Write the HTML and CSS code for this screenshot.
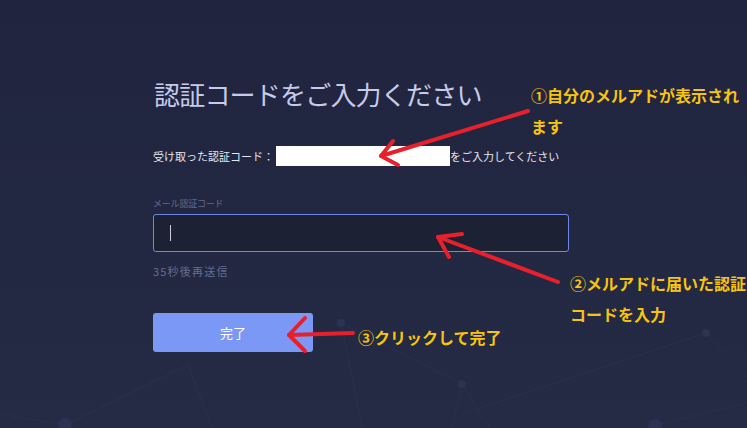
FILE: index.html
```html
<!DOCTYPE html>
<html lang="ja">
<head>
<meta charset="utf-8">
<title>認証コードをご入力ください</title>
<link rel="stylesheet" href="styles.css">
</head>
<body>
<div class="page">
  <svg class="bg-net" width="747" height="428" viewBox="0 0 747 428" aria-hidden="true">
    <g class="net-lines">
      <line x1="0" y1="414" x2="65" y2="425"/>
      <line x1="65" y1="425" x2="188" y2="365"/>
      <line x1="188" y1="365" x2="212" y2="428"/>
      <line x1="341" y1="323" x2="462" y2="384"/>
      <line x1="341" y1="323" x2="362" y2="428"/>
      <line x1="462" y1="384" x2="452" y2="428"/>
      <line x1="462" y1="384" x2="490" y2="428"/>
      <line x1="462" y1="414" x2="706" y2="333"/>
      <line x1="706" y1="333" x2="747" y2="377"/>
      <line x1="655" y1="425" x2="747" y2="403"/>
    </g>
    <g class="net-dots">
      <circle cx="65" cy="425" r="7"/>
      <circle cx="341" cy="323" r="4"/>
      <circle cx="462" cy="384" r="4"/>
      <circle cx="706" cy="333" r="4"/>
      <circle cx="655" cy="426" r="7"/>
    </g>
  </svg>

  <main class="form">
    <h1 class="title">認証コードをご入力ください</h1>
    <p class="notice">
      <span>受け取った認証コード：</span><span class="masked"></span><span>をご入力してください</span>
    </p>
    <label class="field-label">メール認証コード</label>
    <div class="code-input"><span class="caret"></span></div>
    <p class="resend">35秒後再送信</p>
    <button class="submit" type="button">完了</button>
  </main>

  <svg class="arrows" width="747" height="428" viewBox="0 0 747 428" aria-hidden="true">
    <g class="arrow">
      <line x1="528" y1="111" x2="381" y2="156"/>
      <polyline points="393,141 381,156 398,165"/>
    </g>
    <g class="arrow">
      <line x1="558" y1="282" x2="438" y2="237"/>
      <polyline points="462,234 438,237 449,257"/>
    </g>
    <g class="arrow">
      <line x1="353" y1="333" x2="289" y2="335"/>
      <polyline points="305,318 289,335 305,351"/>
    </g>
  </svg>

  <div class="note note-1">①自分のメルアドが表示され<br>ます</div>
  <div class="note note-2">②メルアドに届いた認証<br>コードを入力</div>
  <div class="note note-3">③クリックして完了</div>
</div>
</body>
</html>
```

FILE: styles.css
```css
* { box-sizing: border-box; }

html, body {
  margin: 0;
  padding: 0;
}

body {
  width: 747px;
  height: 428px;
  overflow: hidden;
  background: linear-gradient(180deg, #20243f 0%, #232842 55%, #252a45 100%);
  font-family: "Noto Sans CJK JP", "Noto Sans", sans-serif;
}

.page {
  position: relative;
  width: 747px;
  height: 428px;
}

.bg-net {
  position: absolute;
  left: 0;
  top: 0;
  z-index: 0;
}

.net-lines line {
  stroke: #2a304d;
  stroke-width: 1;
}

.net-dots circle {
  fill: #2c3252;
}

.form {
  position: relative;
  z-index: 1;
  display: flex;
  flex-direction: column;
  align-items: flex-start;
  padding: 81px 0 0 154px;
}

.title {
  margin: 0 0 40px 0;
  font-size: 26px;
  line-height: 25px;
  font-weight: 400;
  color: #c6cbe8;
  letter-spacing: -0.8px;
}

.notice {
  margin: 0 0 33px -1px;
  display: flex;
  align-items: center;
  height: 20px;
  font-size: 11px;
  line-height: 11px;
  color: #e4e6ef;
}

.masked {
  display: block;
  width: 174px;
  height: 20px;
  margin-left: 2px;
  background: #ffffff;
}

.field-label {
  display: block;
  margin: 0 0 6px -1px;
  font-size: 9px;
  line-height: 9px;
  color: #646a88;
  letter-spacing: -0.2px;
}

.code-input {
  width: 416px;
  height: 38px;
  margin: 0 0 14px -1px;
  border: 1px solid #6f87e6;
  border-radius: 3px;
  background: #1d2134;
  display: flex;
  align-items: center;
  padding-left: 16px;
}

.caret {
  display: block;
  width: 1px;
  height: 16px;
  background: #c9cbd8;
}

.resend {
  margin: 0 0 36px -1px;
  font-size: 11px;
  line-height: 11px;
  color: #676d8c;
  letter-spacing: 1.2px;
}

.submit {
  width: 160px;
  height: 39px;
  margin-left: -1px;
  border: none;
  border-radius: 3px;
  background: #7b98f6;
  color: #ffffff;
  font-family: "Noto Sans CJK JP", "Noto Sans", sans-serif;
  font-size: 13px;
  padding: 0;
}

.arrows {
  position: absolute;
  left: 0;
  top: 0;
  z-index: 2;
}

.arrow line,
.arrow polyline {
  stroke: #e8202b;
  stroke-width: 4;
  stroke-linecap: round;
  stroke-linejoin: round;
  fill: none;
}

.note {
  position: absolute;
  z-index: 3;
  font-size: 16px;
  line-height: 31px;
  font-weight: 700;
  color: #f7c40f;
  white-space: nowrap;
}

.note-1 { left: 531px; top: 80px; }
.note-2 { left: 570px; top: 268px; }
.note-3 { left: 358px; top: 322px; }
```
